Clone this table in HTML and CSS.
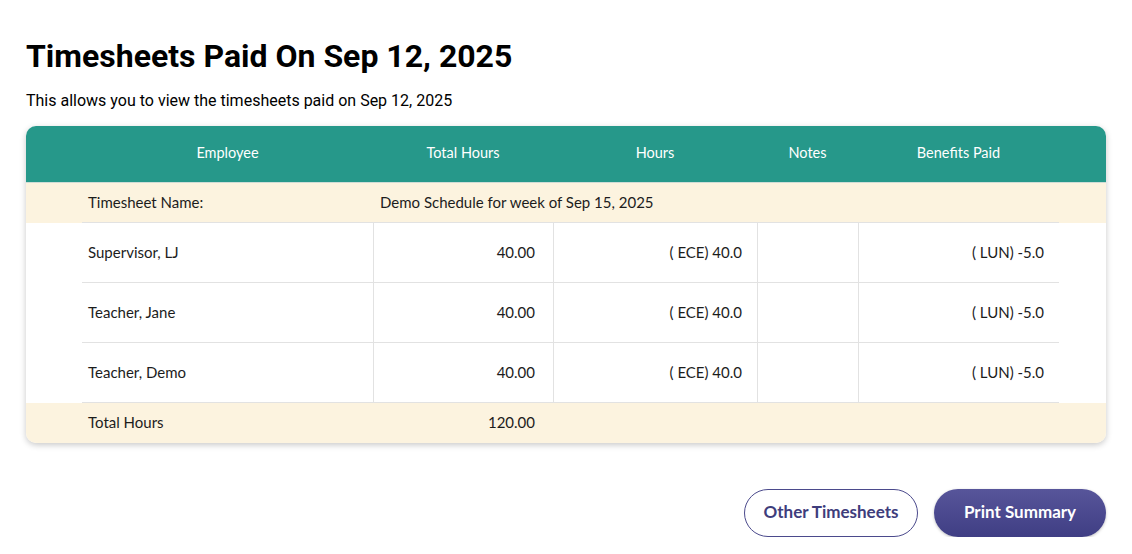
FILE: index.html
```html
<!DOCTYPE html>
<html lang="en">
<head>
<meta charset="utf-8">
<title>Timesheets Paid</title>
<link rel="stylesheet" href="styles.css">
</head>
<body>
<main class="page">
  <h1 class="title">Timesheets Paid On Sep 12, 2025</h1>
  <p class="subtitle">This allows you to view the timesheets paid on Sep 12, 2025</p>

  <div class="card">
    <table class="sheet">
      <colgroup>
        <col class="c-pad-l">
        <col class="c-emp">
        <col class="c-total">
        <col class="c-hours">
        <col class="c-notes">
        <col class="c-ben">
        <col class="c-pad-r">
      </colgroup>
      <thead>
        <tr class="head-row">
          <th></th>
          <th>Employee</th>
          <th>Total Hours</th>
          <th>Hours</th>
          <th>Notes</th>
          <th>Benefits Paid</th>
          <th></th>
        </tr>
      </thead>
      <tbody>
        <tr class="cream-row name-row">
          <td class="pad"></td>
          <td class="lined">Timesheet Name:</td>
          <td class="lined name-val" colspan="4">Demo Schedule for week of Sep 15, 2025</td>
          <td class="pad"></td>
        </tr>
        <tr class="data-row">
          <td class="pad"></td>
          <td class="lined">Supervisor, LJ</td>
          <td class="lined num vline">40.00</td>
          <td class="lined num vline code">( ECE) 40.0</td>
          <td class="lined vline"></td>
          <td class="lined num vline code">( LUN) -5.0</td>
          <td class="pad"></td>
        </tr>
        <tr class="data-row">
          <td class="pad"></td>
          <td class="lined">Teacher, Jane</td>
          <td class="lined num vline">40.00</td>
          <td class="lined num vline code">( ECE) 40.0</td>
          <td class="lined vline"></td>
          <td class="lined num vline code">( LUN) -5.0</td>
          <td class="pad"></td>
        </tr>
        <tr class="data-row">
          <td class="pad"></td>
          <td class="lined">Teacher, Demo</td>
          <td class="lined num vline">40.00</td>
          <td class="lined num vline code">( ECE) 40.0</td>
          <td class="lined vline"></td>
          <td class="lined num vline code">( LUN) -5.0</td>
          <td class="pad"></td>
        </tr>
        <tr class="cream-row total-row">
          <td class="pad"></td>
          <td>Total Hours</td>
          <td class="num">120.00</td>
          <td></td>
          <td></td>
          <td></td>
          <td class="pad"></td>
        </tr>
      </tbody>
    </table>
  </div>

  <div class="actions">
    <button class="btn btn-outline" type="button">Other Timesheets</button>
    <button class="btn btn-solid" type="button">Print Summary</button>
  </div>
</main>
</body>
</html>
```

FILE: styles.css
```css
* {
  box-sizing: border-box;
}

html, body {
  margin: 0;
  padding: 0;
  background: #ffffff;
}

.page {
  padding: 37px 26px 0 26px;
  font-family: Roboto, "Liberation Sans", sans-serif;
  color: #000;
}

.title {
  margin: 0;
  font-family: Roboto, sans-serif;
  font-weight: 700;
  font-size: 32px;
  line-height: 38px;
}

.subtitle {
  margin: 16px 0 0 0;
  font-size: 16px;
  line-height: 19px;
}

.card {
  margin-top: 16px;
  border-radius: 10px;
  overflow: hidden;
  box-shadow: 0 2px 6px rgba(0, 0, 0, 0.22);
  background: #ffffff;
}

.sheet {
  width: 100%;
  table-layout: fixed;
  border-collapse: separate;
  border-spacing: 0;
  font-family: Lato, "Open Sans", sans-serif;
  font-size: 15px;
  color: #1c1c1c;
}

.c-pad-l { width: 56px; }
.c-emp { width: 291px; }
.c-total { width: 180px; }
.c-hours { width: 204px; }
.c-notes { width: 101px; }
.c-ben { width: 201px; }
.c-pad-r { width: 47px; }

.head-row th {
  background: #26988a;
  color: #ffffff;
  font-weight: 400;
  font-size: 14.5px;
  height: 57px;
  padding: 0 0 3px 0;
  text-align: center;
  border-bottom: 1px solid #cfdcd6;
}

.sheet td {
  padding: 0 0 2px 6px;
  vertical-align: middle;
}

.cream-row td {
  background: #fcf3df;
}

.name-row td {
  height: 40px;
}

.name-row .name-val {
  padding-left: 7px;
}

.data-row td {
  height: 60px;
}

.total-row td {
  height: 40px;
}

.lined {
  border-bottom: 1px solid #e2e2e2;
}

.vline {
  border-left: 1px solid #e2e2e2;
}

.sheet td.num {
  text-align: right;
  padding: 0 18px 2px 0;
}

.sheet td.code {
  padding-right: 15px;
}

.sheet td.pad {
  padding: 0;
}

.actions {
  display: flex;
  justify-content: flex-end;
  gap: 16px;
  margin-top: 46px;
}

.btn {
  height: 48px;
  border-radius: 24px;
  font-family: Lato, "Open Sans", sans-serif;
  font-weight: 700;
  font-size: 17px;
  padding: 0 0 3px 0;
  cursor: pointer;
}

.btn-outline {
  width: 174px;
  background: #ffffff;
  color: #3e3d7c;
  border: 1px solid #4b4a8c;
}

.btn-solid {
  width: 172px;
  color: #ffffff;
  border: none;
  background: linear-gradient(180deg, #57559a 0%, #3f3e84 100%);
  box-shadow: 0 1px 3px rgba(0, 0, 0, 0.25);
}
```
